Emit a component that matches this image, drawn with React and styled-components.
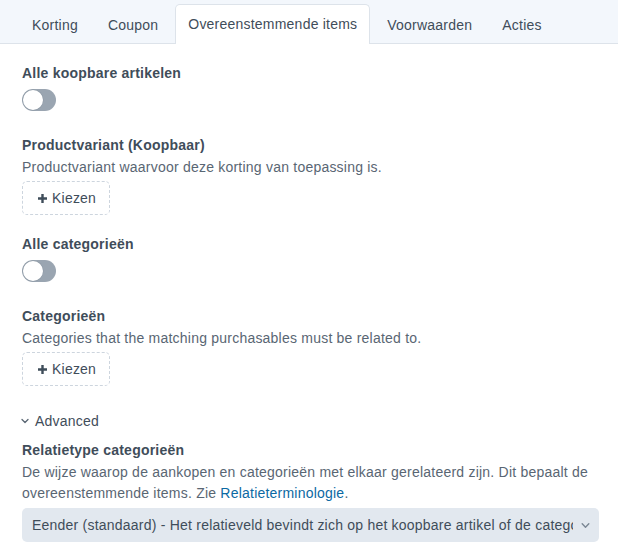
import React from "react";
import styled, { createGlobalStyle } from "styled-components";

const GlobalStyle = createGlobalStyle`
	html, body {
		margin: 0;
		padding: 0;
		background: #fff;
	}
	body {
		font-family: "Liberation Sans", Arial, sans-serif;
		font-size: 14px;
		line-height: 20px;
		letter-spacing: 0.22px;
		color: #3f4d5a;
	}
`;

const Page = styled.div`
	width: 618px;
	height: 558px;
	overflow: hidden;
	background: #fff;
`;

const TabBar = styled.div`
	display: flex;
	align-items: flex-end;
	gap: 4px;
	height: 44px;
	padding-left: 19px;
	box-sizing: border-box;
	background: #f3f7fc;
	border-bottom: 1px solid #dde3ea;
`;

const Tab = styled.div`
	display: flex;
	align-items: center;
	padding: 0 12px 1px;
	box-sizing: border-box;
	margin-bottom: -1px;
	color: #3f4d5a;
	border: 1px solid ${(p) => (p.$active ? "#dde3ea" : "transparent")};
	border-bottom: none;
	border-radius: 5px 5px 0 0;
	background: ${(p) => (p.$active ? "#fff" : "transparent")};
	height: ${(p) => (p.$active ? "40px" : "39px")};
`;

const Content = styled.div`
	display: flex;
	flex-direction: column;
	padding: 19px 19px 0 22px;
`;

const Field = styled.div`
	display: flex;
	flex-direction: column;
	align-items: flex-start;
	margin-top: ${(p) => p.$top || 0}px;
`;

const Heading = styled.div`
	font-weight: bold;
	line-height: 20px;
	color: #3f4d5a;
`;

const Instructions = styled.div`
	line-height: 21px;
	margin-top: 2px;
	color: #596673;
`;

const Link = styled.a`
	color: #0b69a3;
	text-decoration: none;
`;

const Track = styled.div`
	width: 34px;
	height: 22px;
	margin-top: 6px;
	border-radius: 11px;
	background: #9aa5b1;
	display: flex;
	align-items: center;
	padding: 1px;
	box-sizing: border-box;
`;

const Knob = styled.div`
	width: 20px;
	height: 20px;
	border-radius: 50%;
	background: #fff;
	box-shadow: 0 0 0 0.5px #8b97a3;
`;

const DashedButton = styled.button`
	display: flex;
	align-items: center;
	gap: 4px;
	height: 34px;
	margin-top: 3px;
	padding: 0 13px 0 14px;
	box-sizing: border-box;
	border: 1px dashed #cdd5de;
	border-radius: 5px;
	background: transparent;
	font: inherit;
	letter-spacing: inherit;
	color: #3f4d5a;
`;

const Toggler = styled.div`
	display: flex;
	align-items: center;
	gap: 5px;
	margin-top: 25px;
	margin-left: -2px;
	color: #3f4d5a;
`;

const SelectBox = styled.div`
	display: flex;
	align-items: center;
	width: 577px;
	height: 34px;
	margin-top: 4px;
	padding: 0 8px 0 10px;
	box-sizing: border-box;
	border-radius: 5px;
	background: #e2e8ef;
	color: #3f4d5a;
`;

const SelectText = styled.span`
	flex: 1;
	overflow: hidden;
	white-space: nowrap;
	margin-right: 7px;
`;

const Toggle = () => (
	<Track>
		<Knob />
	</Track>
);

const PlusIcon = () => (
	<svg width="11" height="11" viewBox="0 0 11 11">
		<path d="M5.5 1v9M1 5.5h9" stroke="#3f4d5a" strokeWidth="2.4" />
	</svg>
);

const Chevron = ({ size = 10, color = "#596673" }) => (
	<svg width={size} height={size} viewBox="0 0 10 10">
		<path
			d="M2 3.5l3 3 3-3"
			fill="none"
			stroke={color}
			strokeWidth="1.3"
			strokeLinecap="round"
			strokeLinejoin="round"
		/>
	</svg>
);

const tabs = ["Korting", "Coupon", "Overeenstemmende items", "Voorwaarden", "Acties"];

const App = () => {
	return (
		<Page>
			<GlobalStyle />
			<TabBar>
				{tabs.map((t) => (
					<Tab key={t} $active={t === "Overeenstemmende items"}>
						{t}
					</Tab>
				))}
			</TabBar>
			<Content>
				<Field>
					<Heading>Alle koopbare artikelen</Heading>
					<Toggle />
				</Field>
				<Field $top={24}>
					<Heading>Productvariant (Koopbaar)</Heading>
					<Instructions>Productvariant waarvoor deze korting van toepassing is.</Instructions>
					<DashedButton>
						<PlusIcon />
						Kiezen
					</DashedButton>
				</Field>
				<Field $top={19}>
					<Heading>Alle categorieën</Heading>
					<Toggle />
				</Field>
				<Field $top={24}>
					<Heading>Categorieën</Heading>
					<Instructions>Categories that the matching purchasables must be related to.</Instructions>
					<DashedButton>
						<PlusIcon />
						Kiezen
					</DashedButton>
				</Field>
				<Toggler>
					<Chevron size={10} />
					Advanced
				</Toggler>
				<Field $top={9}>
					<Heading>Relatietype categorieën</Heading>
					<Instructions>
						De wijze waarop de aankopen en categorieën met elkaar gerelateerd zijn. Dit bepaalt de
						overeenstemmende items. Zie <Link href="#">Relatieterminologie</Link>.
					</Instructions>
					<SelectBox>
						<SelectText>
							Eender (standaard) - Het relatieveld bevindt zich op het koopbare artikel of de categorie
						</SelectText>
						<Chevron size={11} color="#7b8794" />
					</SelectBox>
				</Field>
			</Content>
		</Page>
	);
};

export default App;
